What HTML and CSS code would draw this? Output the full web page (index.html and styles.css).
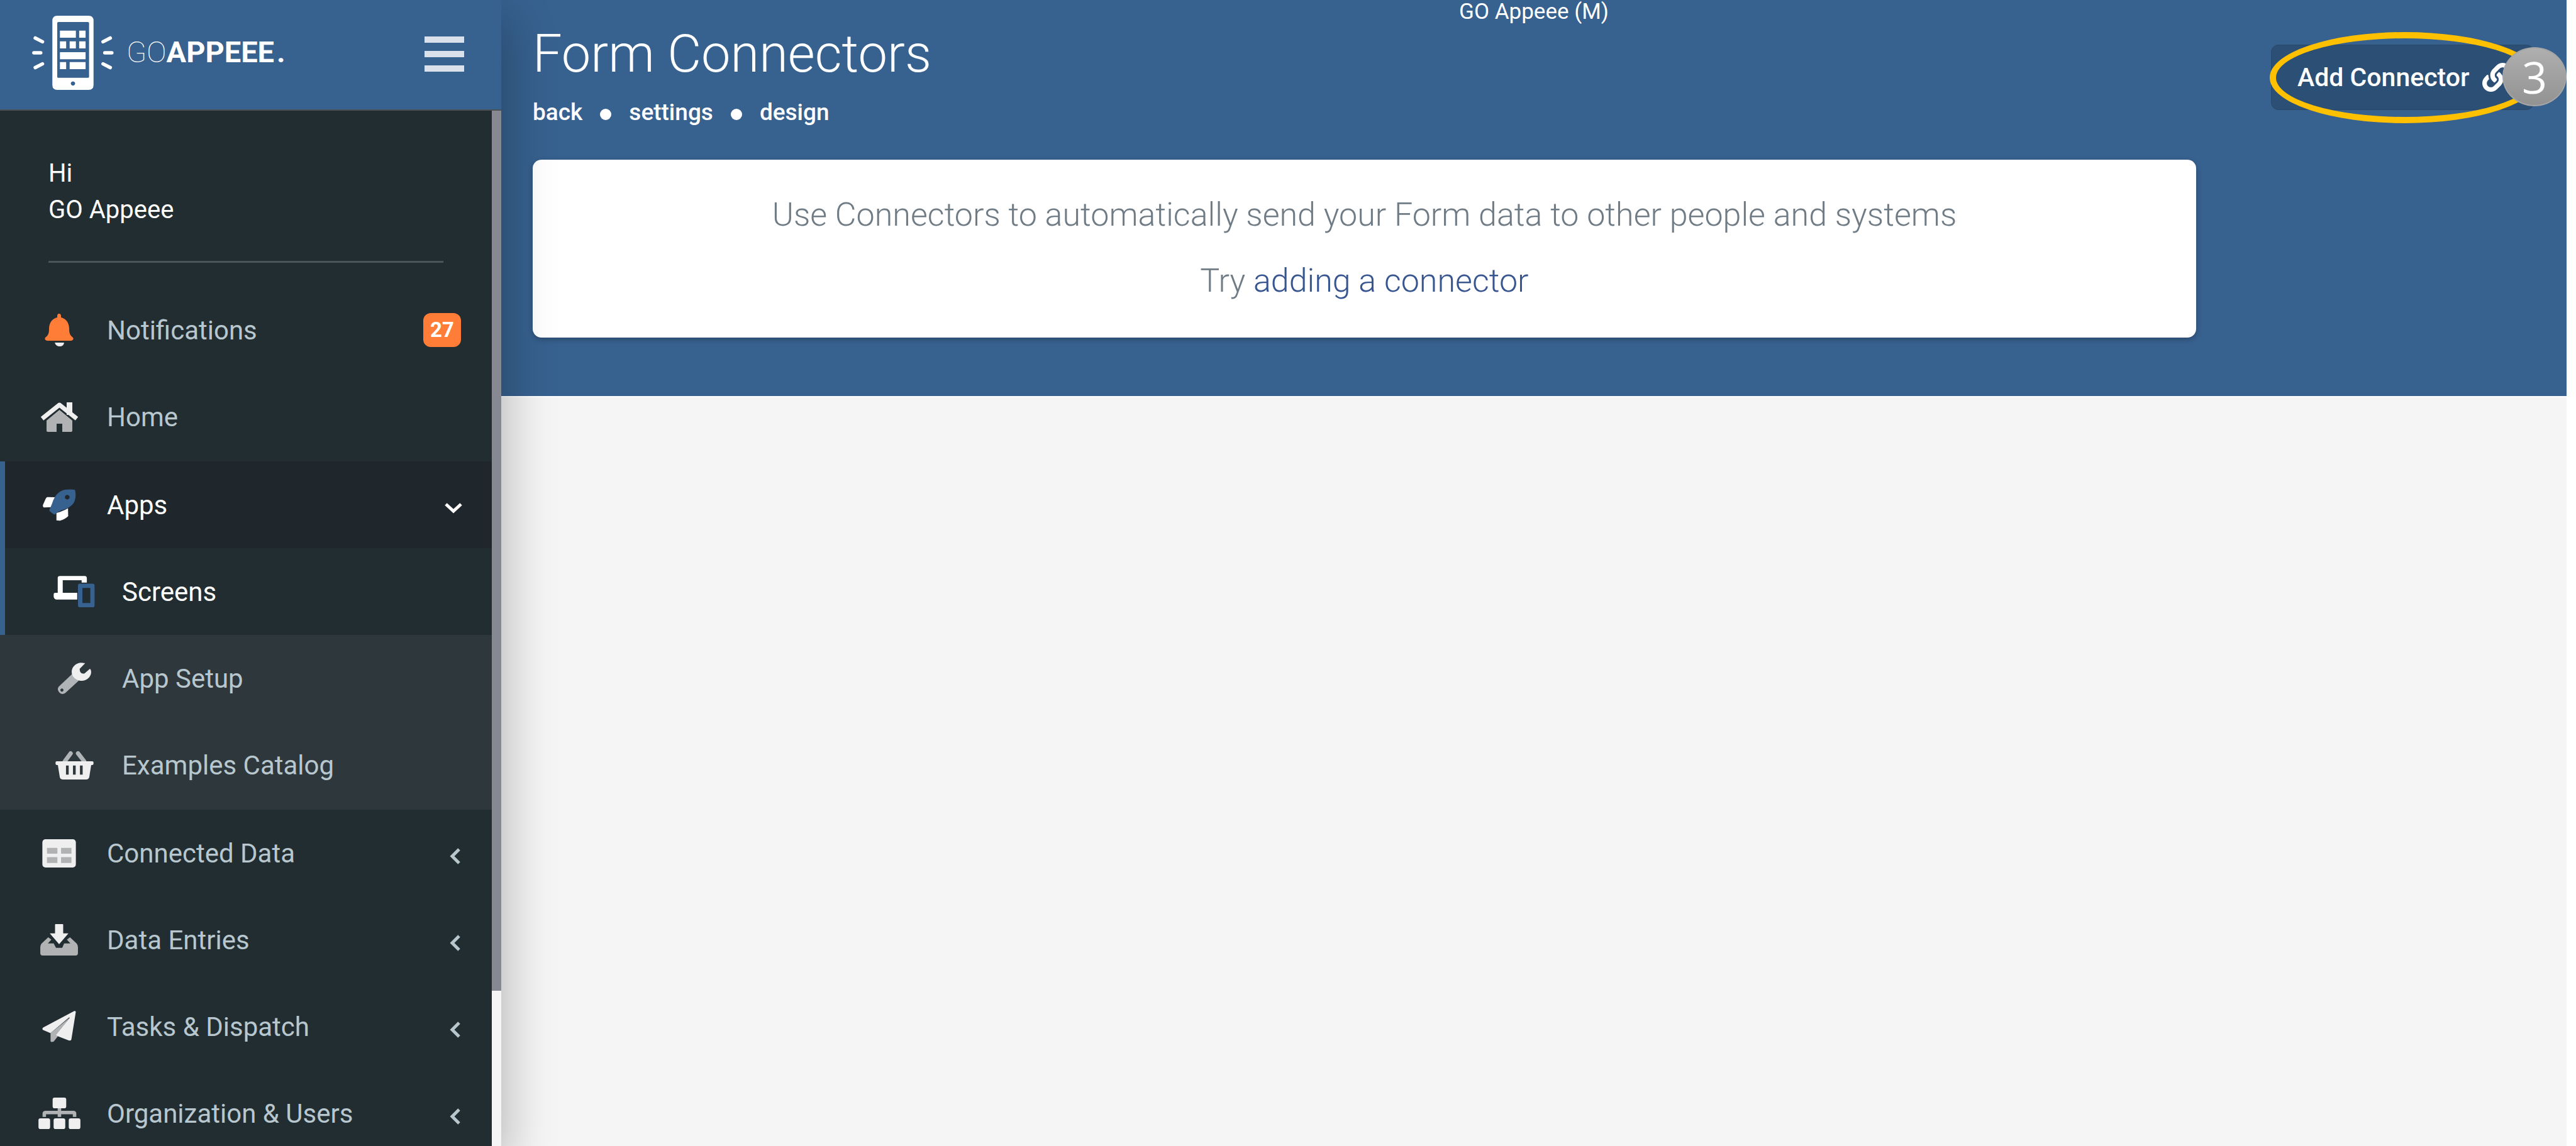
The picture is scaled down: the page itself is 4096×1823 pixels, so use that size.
FILE: index.html
```html
<!DOCTYPE html>
<html lang="en">
<head>
<meta charset="utf-8">
<title>Form Connectors</title>
<link rel="stylesheet" href="styles.css">
</head>
<body>
<aside class="sidebar">
  <header class="brand">
    <a class="logo" href="#" aria-label="GO Appeee">
      <svg class="logo-mark" viewBox="75 80 420 382" width="130" height="118" aria-hidden="true">
        <path fill="#fff" fill-rule="evenodd" d="M205 80H365Q391 80 391 106V436Q391 462 365 462H205Q179 462 179 436V106Q179 80 205 80ZM210 112Q204 112 204 118V394Q204 400 210 400H362Q368 400 368 394V118Q368 112 362 112ZM285 418a11 11 0 1 0 .1 0Z"/>
        <path fill="#fff" d="M218 157h82v36h-82ZM317 157h33v36h-33ZM218 212h32v36h-32ZM268 212h32v36h-32ZM317 212h33v36h-33ZM218 268h132v36H218ZM218 319h32v36h-32ZM268 319h82v36h-82Z"/>
        <path stroke="#fff" stroke-width="18" stroke-linecap="round" d="M91 195 128 214M84 271h35M91 347l37-19M477 195l-37 19M449 271h36M477 347l-37-19"/>
      </svg>
      <span class="logo-text"><span class="thin">GO</span><b>APPEEE</b><b class="dot">.</b></span>
    </a>
    <button class="burger" type="button" aria-label="Toggle menu"><i></i><i></i><i></i></button>
  </header>
  <div class="side-body">
    <div class="side-scroll">
      <div class="profile">Hi<br>GO Appeee</div>
      <nav>
        <ul class="menu">
          <li><a href="#"><span class="ico"><svg viewBox="0 0 46 52" width="46" height="52"><path fill="#ff7d36" d="M23 0q3 0 3 4v2C35 8 39 16 39 24C39 32 41 35 45 38Q47 42 42 43H4Q-1 42 1 38C5 35 7 32 7 24C7 16 11 8 20 6V4Q20 0 23 0Z"/><path fill="#eee" d="M16 46h15q-1 6-7 6t-8-6Z"/></svg></span><span class="label">Notifications</span><span class="count">27</span></a></li>
          <li class="group-end"><a href="#"><span class="ico"><svg viewBox="0 0 59 47" width="59" height="47"><path fill="#efefef" d="M41 0h9v20h-9Z"/><path fill="none" stroke="#efefef" stroke-width="7" stroke-linejoin="round" d="M2 26 29.500 4 57 26"/><path fill="#b0b2b3" d="M29.500 12 50 29V45Q50 47 48 47H34V34H25V47H11Q9 47 9 45V29Z"/></svg></span><span class="label">Home</span></a></li>
          <li class="active"><a href="#"><span class="ico"><svg viewBox="33 43 173 164" width="53" height="51"><path fill="#fff" d="M57 83 102 84Q86 110 80 136L38 137Q32 134 34 124L48 92Q52 84 57 83ZM104 166Q140 155 164 141L165 182Q150 198 122 206L104 204Z"/><path fill="#37618f" fill-rule="evenodd" d="M148 45Q180 42 200 46Q208 75 198 105C188 130 160 145 130 152L104 165 96 174Q88 174 68 155Q66 148 72 140L82 115C95 75 115 52 148 45ZM160 72a12 12 0 1 0 .1 0Z"/></svg></span><span class="label">Apps</span><svg class="chev" viewBox="0 0 30 18" width="30" height="18"><path d="M3 3 15 14 27 3"/></svg></a>
            <ul class="submenu">
              <li class="active"><a href="#"><span class="ico"><svg viewBox="95 475 213 163" width="66" height="50"><path fill="#fff" d="M116 563V486Q116 476 128 476H256Q267 476 267 488V510H240V498H142V563H217V598H108Q95 594 95 580V570Q95 563 103 563Z"/><path fill="#37618f" fill-rule="evenodd" d="M231 516H297Q307 516 307 526V628Q307 638 297 638H231Q221 638 221 628V526Q221 516 231 516ZM244 538V616H285V538Z"/></svg></span><span class="label">Screens</span></a></li>
              <li><a href="#"><span class="ico"><svg viewBox="115 914 174 164" width="54" height="51"><path fill="#b0b4b6" fill-rule="evenodd" d="M192 972 226 1006 156 1070A24 24 0 0 1 122 1038ZM139 1047a8 8 0 1 0 .1 0Z"/><path fill="#efefef" d="M238 915 258 917 230 946Q230 968 245 970L254 970 283 945Q288 950 289 962A50 46 0 1 1 238 915Z"/></svg></span><span class="label">App Setup</span></a></li>
              <li><a href="#"><span class="ico"><svg viewBox="104 1356 196 146" width="61" height="45"><path fill="none" stroke="#b0b4b6" stroke-width="22" stroke-linecap="round" d="M152 1408 182 1367M252 1408 220 1367"/><path fill="#efefef" fill-rule="evenodd" d="M110 1408H294Q300 1408 300 1415V1420Q300 1427 294 1427H288L278 1490Q275 1502 262 1502H143Q128 1502 126 1490L116 1427H110Q104 1427 104 1420V1415Q104 1408 110 1408ZM158 1430V1477H172V1430ZM194 1430V1477H208V1430ZM230 1430V1477H244V1430Z"/></svg></span><span class="label">Examples Catalog</span></a></li>
            </ul>
          </li>
          <li><a href="#"><span class="ico"><svg viewBox="39 44 174 147" width="54" height="45"><rect x="39" y="44" width="174" height="147" rx="16" fill="#efefef"/><path fill="#b0b2b3" d="M63 89h54v30H63ZM136 89h54v30h-54ZM63 137h54v30H63ZM136 137h54v30h-54Z"/></svg></span><span class="label">Connected Data</span><svg class="chev" viewBox="0 0 18 28" width="18" height="28"><path d="M15 3 4 14 15 25"/></svg></a></li>
          <li><a href="#"><span class="ico"><svg viewBox="29 472 194 162" width="60" height="50"><path fill="#efefef" d="M108 472H144Q147 472 147 476V520H174L126 576 78 520H105V476Q105 472 108 472Z"/><path fill="#b0b2b3" d="M70 540 86 552 68 572H98L110 594H142L152 572H184L166 552 182 540 216 572Q223 580 223 590V622Q223 634 211 634H41Q29 634 29 622V590Q29 580 36 572Z"/></svg></span><span class="label">Data Entries</span><svg class="chev" viewBox="0 0 18 28" width="18" height="28"><path d="M15 3 4 14 15 25"/></svg></a></li>
          <li><a href="#"><span class="ico"><svg viewBox="39 900 175 163" width="54" height="50"><path fill="#efefef" d="M205 901Q213 899 213 906L190 1048Q187 1056 178 1054L106 1026 182 936 178 934 82 1016 42 999Q37 991 44 986Z"/><path fill="#b0b2b3" d="M182 935 110 1026 120 1032 98 1060Q84 1064 82 1058V1016Z"/></svg></span><span class="label">Tasks &amp; Dispatch</span><svg class="chev" viewBox="0 0 18 28" width="18" height="28"><path d="M15 3 4 14 15 25"/></svg></a></li>
          <li><a href="#"><span class="ico"><svg viewBox="18 1330 216 162" width="67" height="50"><path fill="none" stroke="#b0b2b3" stroke-width="18" d="M48 1430V1413Q48 1407 55 1407H197Q204 1407 204 1413V1430M126 1380V1430"/><g fill="#efefef"><rect x="91" y="1330" width="70" height="55" rx="10"/><rect x="18" y="1437" width="60" height="55" rx="10"/><rect x="96" y="1437" width="60" height="55" rx="10"/><rect x="174" y="1437" width="60" height="55" rx="10"/></g></svg></span><span class="label">Organization &amp; Users</span><svg class="chev" viewBox="0 0 18 28" width="18" height="28"><path d="M15 3 4 14 15 25"/></svg></a></li>
        </ul>
      </nav>
    </div>
    <div class="track"><div class="thumb"></div></div>
  </div>
</aside>
<main class="content">
  <section class="hero">
    <p class="account">GO Appeee (M)</p>
    <div class="title">
      <h1>Form Connectors</h1>
      <nav class="crumbs"><a href="#">back</a><i></i><a href="#">settings</a><i></i><a href="#">design</a></nav>
    </div>
    <div class="actions">
      <button class="add" type="button">Add Connector
        <svg viewBox="0 0 512 512" width="46" height="46" aria-hidden="true"><path fill="#fff" d="M326.612 185.391c59.747 59.809 58.927 155.698.36 214.59-.11.12-.24.25-.36.37l-67.2 67.2c-59.27 59.27-155.699 59.262-214.96 0-59.27-59.26-59.27-155.7 0-214.96l37.106-37.106c9.84-9.84 26.786-3.3 27.294 10.606.648 17.722 3.826 35.527 9.69 52.721 1.986 5.822.567 12.262-3.783 16.612l-13.087 13.087c-28.026 28.026-28.905 73.66-1.155 101.96 28.024 28.579 74.086 28.749 102.325.51l67.2-67.19c28.191-28.191 28.073-73.757 0-101.83-3.701-3.694-7.429-6.564-10.341-8.569a16.037 16.037 0 0 1-6.947-12.606c-.396-10.567 3.348-21.456 11.698-29.806l21.054-21.055c5.521-5.521 14.182-6.199 20.584-1.731a152.482 152.482 0 0 1 20.522 17.197zM467.547 44.449c-59.261-59.262-155.69-59.27-214.96 0l-67.2 67.2c-.12.12-.25.25-.36.37-58.566 58.892-59.387 154.781.36 214.59a152.454 152.454 0 0 0 20.521 17.196c6.402 4.468 15.064 3.789 20.584-1.731l21.054-21.055c8.35-8.35 12.094-19.239 11.698-29.806a16.037 16.037 0 0 0-6.947-12.606c-2.912-2.005-6.64-4.875-10.341-8.569-28.073-28.073-28.191-73.639 0-101.83l67.2-67.19c28.239-28.239 74.3-28.069 102.325.51 27.75 28.3 26.872 73.934-1.155 101.96l-13.087 13.087c-4.35 4.35-5.769 10.79-3.783 16.612 5.864 17.194 9.042 34.999 9.69 52.721.509 13.906 17.454 20.446 27.294 10.606l37.106-37.106c59.271-59.259 59.271-155.699.001-214.959z"/></svg>
      </button>
      <span class="ring"></span>
      <span class="step">3</span>
    </div>
    <div class="card">
      <p>Use Connectors to automatically send your Form data to other people and systems</p>
      <p>Try <a href="#">adding a connector</a></p>
    </div>
  </section>
</main>
</body>
</html>
```
FILE: styles.css
```css
* { box-sizing: border-box; }

body {
  margin: 0;
  display: flex;
  min-height: 100vh;
  background: #f5f5f5;
  font-family: Roboto, "Liberation Sans", sans-serif;
  color: #fff;
}

a { color: inherit; text-decoration: none; }
ul { list-style: none; margin: 0; padding: 0; }
p, h1 { margin: 0; }
button { font: inherit; color: inherit; border: 0; background: none; cursor: pointer; }
svg { display: block; flex: none; }

/* Sidebar */
.sidebar {
  position: relative;
  z-index: 1;
  flex: none;
  display: flex;
  flex-direction: column;
  width: 797px;
  height: 100vh;
  box-shadow: 10px 30px 70px rgba(0, 0, 0, .25);
}

.brand {
  flex: none;
  display: flex;
  justify-content: space-between;
  align-items: flex-start;
  height: 176px;
  padding: 25px 59px 0 51px;
  background: #37618f;
  border-bottom: 2px solid #4b5054;
}

.logo { display: flex; gap: 20px; }
.logo-text { display: flex; padding-top: 29px; font-size: 47px; line-height: 58px; }
.logo-text .thin { font-weight: 100; }
.logo-text b { font-weight: 700; }
.logo-text .dot { margin-left: 4px; }

.burger {
  display: flex;
  flex-direction: column;
  gap: 13px;
  padding: 33px 0 0;
}
.burger i { width: 63px; height: 10px; background: #dae1ea; }

.side-body { flex: 1; min-height: 0; display: flex; background: #222d32; }
.side-scroll { flex: 1; overflow: hidden; }
.track { width: 15px; background: #f5f5f5; }
.thumb { height: 85%; background: #868991; }

.profile {
  margin: 0 77px 38px;
  padding: 71px 0 52px;
  border-bottom: 3px solid #4a545b;
  font-size: 40px;
  line-height: 58px;
}

.menu { color: #b8c7ce; font-size: 42px; }
.menu a {
  display: flex;
  align-items: center;
  height: 138px;
  padding: 0 49px 0 60px;
}
.menu .ico { display: flex; justify-content: center; flex: none; width: 68px; }
.menu .label { flex: 1; margin-left: 42px; white-space: nowrap; }
.menu .group-end { margin-bottom: 2px; }
.menu .active { color: #fff; }
.menu > .active > a { padding-right: 46px; background: #1f272d; box-shadow: inset 8px 0 #37618f; }

.submenu { padding-bottom: 2px; background: #2d373c; color: #b8c7ce; }
.submenu a { padding-left: 84px; }
.submenu .active a { background: #222d32; box-shadow: inset 8px 0 #37618f; }

.chev {
  margin-top: 10px;
  fill: none;
  stroke: currentColor;
  stroke-width: 5px;
}

.count {
  width: 60px;
  border-radius: 12px;
  background: #ff7d36;
  color: #fff;
  font-size: 33px;
  font-weight: 700;
  line-height: 54px;
  text-align: center;
}

/* Content */
.content { flex: 1; min-width: 0; border-right: 15px solid #fff; }

.hero {
  display: grid;
  grid-template-columns: minmax(0, 1fr) 589px;
  padding: 0 0 93px 50px;
  background: #37618f;
  border-bottom: 2px solid #fff;
}

.account {
  grid-column: 1 / -1;
  margin-left: -50px;
  font-size: 35px;
  line-height: 38px;
  text-align: center;
}

h1 { font-size: 83px; font-weight: 300; line-height: 96px; }

.crumbs {
  display: flex;
  align-items: center;
  gap: 28px;
  margin: 23px 0 53px;
  font-size: 37px;
  font-weight: 500;
  line-height: 44px;
}
.crumbs i { width: 18px; height: 18px; margin-top: 6px; border-radius: 50%; background: #fff; }

.actions {
  position: relative;
  justify-self: end;
  align-self: start;
  margin: 33px 52px 0 0;
}

.add {
  display: flex;
  align-items: center;
  gap: 20px;
  width: 418px;
  height: 104px;
  padding: 0 0 0 41px;
  border: 1px solid #2a4869;
  border-radius: 12px;
  background: #2c4f75;
  font-size: 41px;
  font-weight: 500;
  white-space: nowrap;
}

.ring {
  position: absolute;
  left: -2px;
  top: -20px;
  width: 429px;
  height: 145px;
  border: 10px solid #ffc000;
  border-radius: 50%;
}

.step {
  position: absolute;
  left: 368px;
  top: 4px;
  width: 102px;
  height: 94px;
  border: 2px solid #a5a5a5;
  border-radius: 50%;
  background: linear-gradient(#afafaf, #929292);
  font: 70px/90px "Open Sans", sans-serif;
  text-align: center;
}

.card {
  display: flex;
  flex-direction: column;
  gap: 45px;
  padding: 58px 40px 60px;
  border-radius: 14px;
  background: #fff;
  box-shadow: 0 3px 8px rgba(0, 0, 0, .25);
  color: #6f7b85;
  font-size: 52px;
  font-weight: 300;
  line-height: 60px;
  text-align: center;
}
.card a { color: #37558f; }
```
